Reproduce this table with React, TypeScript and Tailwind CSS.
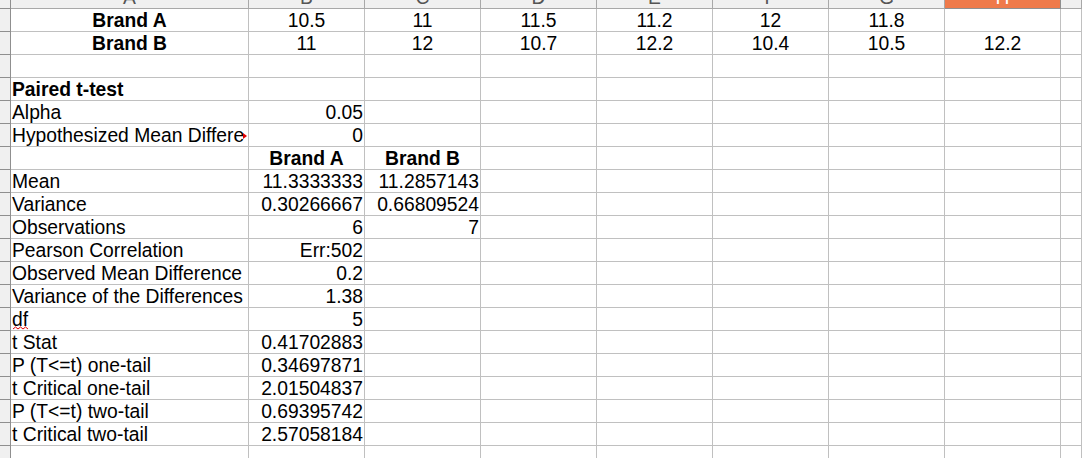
type Align = "left" | "center" | "right"

interface CellDef {
    text: string,
    bold?: boolean,
    align?: Align,
    kind?: "overflow" | "spell"
}

const columns = ["A", "B", "C", "D", "E", "F", "G", "H", "I"]

const alignClass: Record<Align, string> = {
    left: "text-left",
    center: "text-center",
    right: "text-right",
}

function c(text: string): CellDef {
    return { text, align: "center" }
}
function r(text: string): CellDef {
    return { text, align: "right" }
}
function l(text: string, kind?: "overflow" | "spell"): CellDef {
    return { text, align: "left", kind }
}

const rows: (CellDef | null)[][] = [
    [{ text: "Brand A", bold: true, align: "center" }, c("10.5"), c("11"), c("11.5"), c("11.2"), c("12"), c("11.8"), null],
    [{ text: "Brand B", bold: true, align: "center" }, c("11"), c("12"), c("10.7"), c("12.2"), c("10.4"), c("10.5"), c("12.2")],
    [],
    [{ text: "Paired t-test", bold: true, align: "left" }],
    [l("Alpha"), r("0.05")],
    [l("Hypothesized Mean Difference", "overflow"), r("0")],
    [null, { text: "Brand A", bold: true, align: "center" }, { text: "Brand B", bold: true, align: "center" }],
    [l("Mean"), r("11.3333333"), r("11.2857143")],
    [l("Variance"), r("0.30266667"), r("0.66809524")],
    [l("Observations"), r("6"), r("7")],
    [l("Pearson Correlation"), r("Err:502")],
    [l("Observed Mean Difference"), r("0.2")],
    [l("Variance of the Differences"), r("1.38")],
    [l("df", "spell"), r("5")],
    [l("t Stat"), r("0.41702883")],
    [l("P (T<=t) one-tail"), r("0.34697871")],
    [l("t Critical one-tail"), r("2.01504837")],
    [l("P (T<=t) two-tail"), r("0.69395742")],
    [l("t Critical two-tail"), r("2.57058184")],
    [],
]

function Cell(props: { cell: CellDef | null }) {
    const cell = props.cell
    if (!cell) {
        return <div className="h-[23px] border-b border-r border-[#c0c0c0]"></div>
    }
    const weight = cell.bold ? "font-bold" : "font-normal"
    if (cell.kind === "overflow") {
        return (
            <div className="relative h-[23px] border-b border-r border-[#c0c0c0] pt-[1px] pl-[1px] pr-[4px]">
                <div className="overflow-hidden whitespace-nowrap">{cell.text}</div>
                <svg className="absolute right-[1px] top-[9px]" width="4" height="6" viewBox="0 0 4 6">
                    <polygon points="0,0 4,3 0,6" fill="#e00000" />
                </svg>
            </div>
        )
    }
    return (
        <div className={`relative h-[23px] border-b border-r border-[#c0c0c0] pt-[1px] px-[1px] whitespace-nowrap overflow-hidden ${alignClass[cell.align ?? "left"]} ${weight}`}>
            {cell.text}
            {cell.kind === "spell" && (
                <svg className="absolute left-[2px] top-[18px]" width="15" height="4" viewBox="0 0 15 4">
                    <path d="M0 3 L2.5 1 L5 3 L7.5 1 L10 3 L12.5 1 L15 3" fill="none" stroke="#e00000" strokeWidth="1" />
                </svg>
            )}
        </div>
    )
}

export default function App() {
    return (
        <div className="h-[458px] w-[1082px] overflow-hidden bg-white font-['Liberation_Sans',Arial,sans-serif] text-[19.3px] leading-[22px] text-black">
            <div className="-mt-[14px] grid grid-cols-[11px_238px_repeat(7,116px)_1fr]">
                <div className="h-[23px] border-b border-r border-[#8f8f8f] bg-[#f0f0f0]"></div>
                {columns.map(col => (
                    <div key={col} className={col === "H"
                        ? "h-[23px] border-b border-r border-[#8f8f8f] bg-[#ef7a4a] pt-[1px] text-center text-white"
                        : "h-[23px] border-b border-r border-[#a8a8a8] bg-[#f0f0f0] pt-[1px] text-center text-[#555]"}>
                        {col === "I" ? "" : col}
                    </div>
                ))}
                {rows.map((row, i) => (
                    <div key={i} className="contents">
                        <div className="h-[23px] border-b border-r border-[#8f8f8f] bg-[#f0f0f0]"></div>
                        {columns.map((col, j) => <Cell key={col} cell={row[j] ?? null} />)}
                    </div>
                ))}
            </div>
        </div>
    )
}
